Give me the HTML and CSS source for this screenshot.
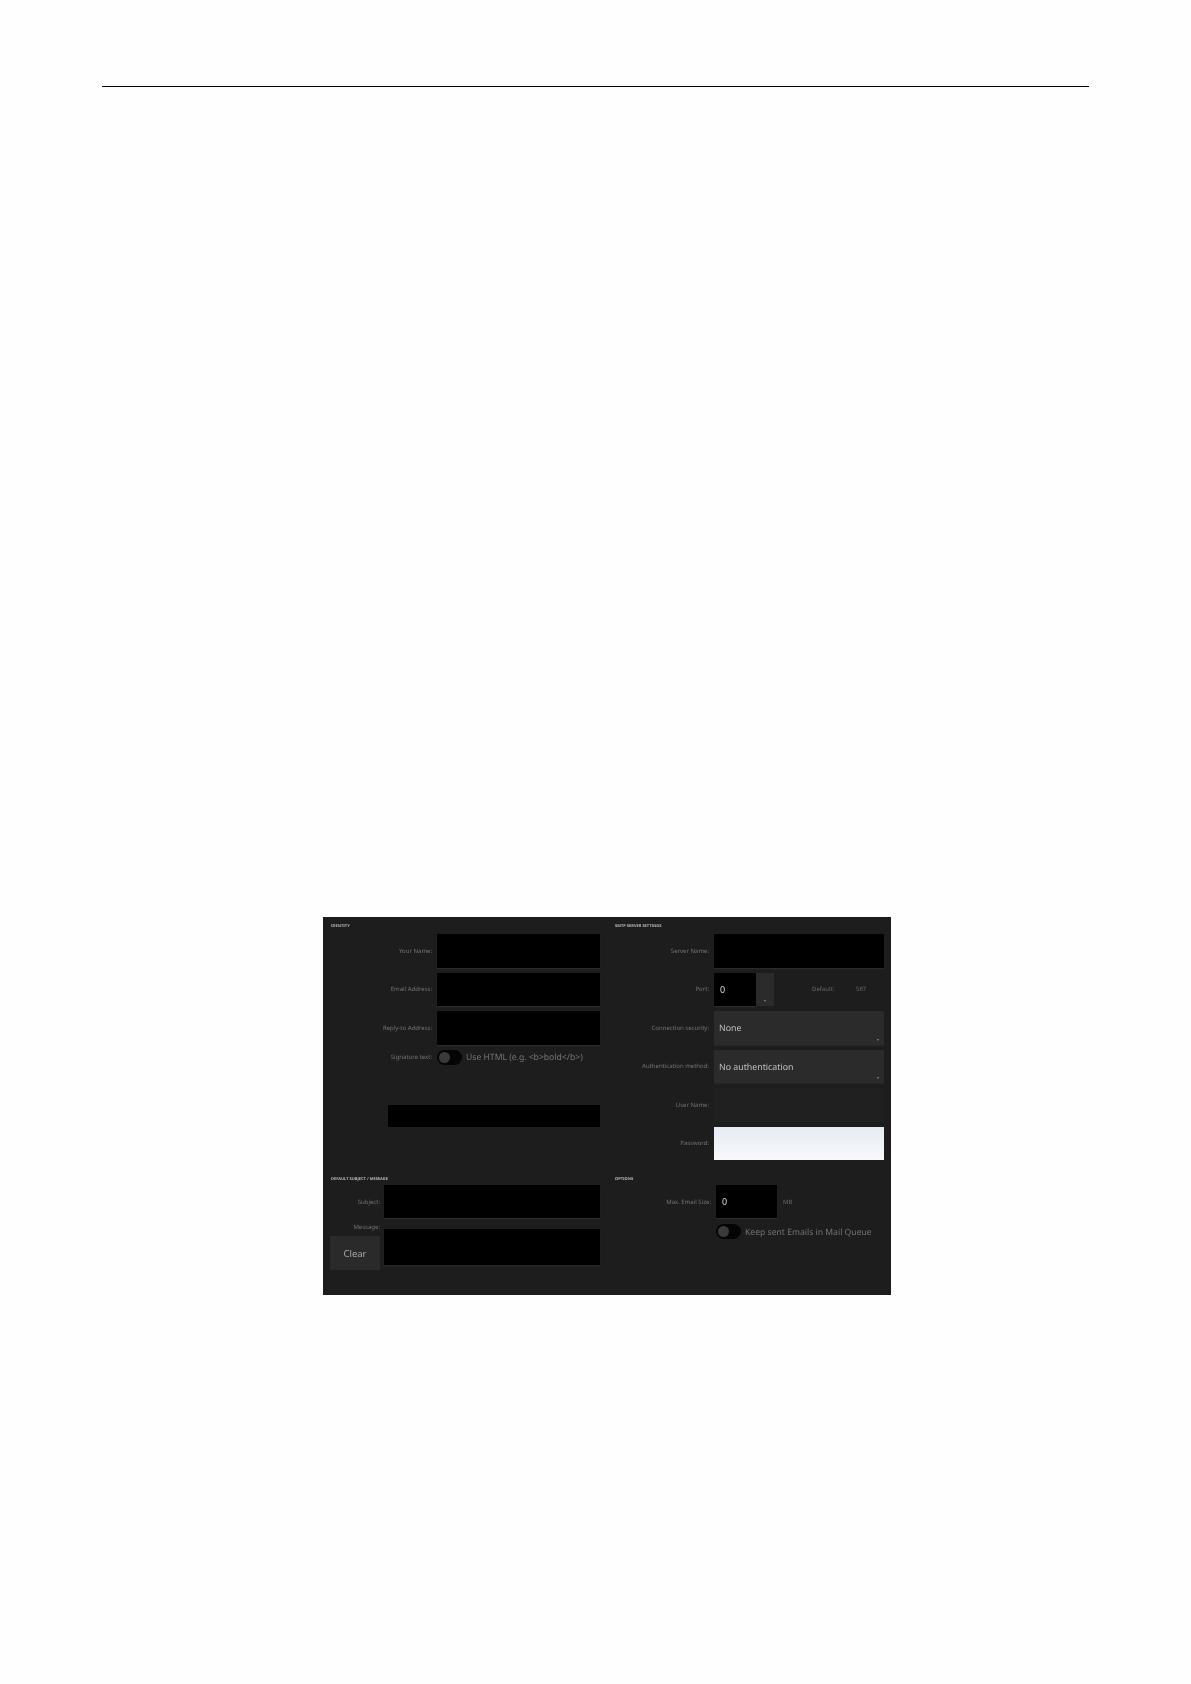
FILE: index.html
```html
<!DOCTYPE html>
<html lang="en">
<head>
<meta charset="utf-8">
<title>Email settings</title>
<link rel="stylesheet" href="styles.css">
</head>
<body>
<header class="rule"></header>
<main class="panel">
  <section class="group identity">
    <h2>Identity</h2>
    <div class="form">
      <label>Your Name:</label><input class="field" type="text">
      <label>Email Address:</label><input class="field" type="text">
      <label>Reply-to Address:</label><input class="field" type="text">
      <label class="short">Signature text:</label>
      <div class="switch-row short"><span class="switch"><i></i></span><span class="switch-text">Use HTML (e.g. &lt;b&gt;bold&lt;/b&gt;)</span></div>
    </div>
    <div class="signature"></div>
  </section>

  <section class="group smtp">
    <h2>SMTP Server Settings</h2>
    <div class="form">
      <label>Server Name:</label><input class="field" type="text">
      <label>Port:</label>
      <div class="port">
        <input class="field num" type="text" value="0">
        <span class="spin"><b class="arrow"></b></span>
        <span class="def-label">Default:</span>
        <span class="def-value">587</span>
      </div>
      <label>Connection security:</label>
      <div class="select">None<b class="arrow"></b></div>
      <label>Authentication method:</label>
      <div class="select">No authentication<b class="arrow"></b></div>
      <label>User Name:</label><div class="field disabled"></div>
      <label>Password:</label><div class="field password"></div>
    </div>
  </section>

  <section class="group defaults">
    <h2>Default Subject / Message</h2>
    <div class="form-b">
      <label>Subject:</label><input class="field" type="text">
      <div class="msg-side">
        <label>Message:</label>
        <button class="clear" type="button">Clear</button>
      </div>
      <div class="field message"></div>
    </div>
  </section>

  <section class="group options">
    <h2>Options</h2>
    <div class="form-c">
      <label>Max. Email Size:</label>
      <div class="size"><input class="field num" type="text" value="0"><span class="unit">MB</span></div>
      <span></span>
      <div class="switch-row keep"><span class="switch"><i></i></span><span class="switch-text">Keep sent Emails in Mail Queue</span></div>
    </div>
  </section>
</main>
</body>
</html>
```
FILE: styles.css
```css
* { box-sizing: border-box; }
html, body { margin: 0; padding: 0; }
body {
  width: 1191px;
  height: 1684px;
  background: #fefefe;
  font-family: "Noto Sans", "Open Sans", sans-serif;
  text-rendering: geometricPrecision;
  overflow: hidden;
}
.rule {
  height: 1px;
  margin: 86px 102px 0 102px;
  background: #000;
}
.panel {
  width: 568px;
  height: 378px;
  margin: 830px 0 0 323px;
  background: #1d1d1d;
  display: grid;
  grid-template-columns: 285px 283px;
  grid-template-rows: 253px 125px;
  filter: blur(0.3px);
}
.group { padding: 0 0 0 8px; }
.smtp, .options { padding-left: 7px; }
h2 {
  margin: 0;
  height: 17px;
  padding-top: 7px;
  font-size: 4px;
  line-height: 6px;
  font-weight: 700;
  text-transform: uppercase;
  color: #b8b8b8;
}
label {
  font-size: 6px;
  color: #747474;
  text-align: right;
  white-space: nowrap;
  align-self: center;
}
.field {
  display: block;
  width: 100%;
  height: 33.5px;
  border: 0;
  padding: 0 6px;
  margin: 0;
  background: #000;
  color: #ddd;
  font: 9px "Noto Sans", sans-serif;
  box-shadow: 0 1px 1px #2a2a2a;
  outline: 0;
}
.form {
  display: grid;
  column-gap: 5px;
  row-gap: 5px;
  grid-auto-rows: min-content;
}
.identity .form { grid-template-columns: 101px 163px; }
.smtp .form { grid-template-columns: 94px 170px; }
.short { align-self: center; }
.switch-row { display: flex; align-items: center; gap: 4px; }
.switch {
  display: block;
  width: 25px;
  height: 15px;
  padding: 2px;
  border-radius: 8px;
  background: #050505;
}
.switch i {
  display: block;
  width: 11px;
  height: 11px;
  border-radius: 50%;
  background: #3a3a3a;
}
.switch-text {
  font-size: 8.6px;
  color: #747474;
  white-space: nowrap;
}
.signature {
  width: 212px;
  height: 22px;
  margin: 40px 0 0 57px;
  background: #000;
}
.port { display: flex; align-items: center; height: 33.5px; }
.num { width: 42px; flex: none; }
.spin {
  position: relative;
  flex: none;
  width: 18px;
  height: 33.5px;
  background: #2b2b2b;
}
.arrow {
  position: absolute;
  right: 8px;
  bottom: 4px;
  border-left: 1.5px solid transparent;
  border-right: 1.5px solid transparent;
  border-top: 2px solid #8a8a8a;
}
.def-label {
  margin-left: 38px;
  width: 44px;
  font-size: 6px;
  color: #686868;
}
.def-value { font-size: 6px; color: #686868; }
.select {
  position: relative;
  height: 33.5px;
  padding-left: 5px;
  background: #2b2b2b;
  color: #c2c2c2;
  font-size: 8.8px;
  line-height: 35px;
  box-shadow: 0 1px 1px #252525;
}
.select .arrow { right: 5px; }
.disabled { background: #202020; box-shadow: none; }
.password {
  background: linear-gradient(#e6ecf3, #f8f9fb);
  box-shadow: none;
}
.form-b {
  display: grid;
  grid-template-columns: 49px 216px;
  column-gap: 4px;
  row-gap: 6px;
  margin-top: -2px;
}
.msg-side { display: flex; flex-direction: column; align-items: stretch; }
.msg-side label { align-self: flex-end; line-height: 9px; margin-top: -1px; }
.defaults .field { height: 33px; }
.defaults .message { height: 36px; margin-top: 5px; }
.clear {
  width: 50px;
  height: 34px;
  margin: 4px 0 0 -1px;
  border: 0;
  padding: 0;
  background: #2a2a2a;
  color: #a8a8a8;
  font: 9.5px "Noto Sans", sans-serif;
}
.form-c {
  display: grid;
  grid-template-columns: 97px auto;
  column-gap: 4px;
  row-gap: 6px;
  grid-auto-rows: min-content;
  margin-top: -2px;
}
.form-c label { padding-right: 1px; }
.size { display: flex; align-items: center; gap: 6px; }
.size .num { width: 61px; height: 33px; }
.unit { font-size: 6px; color: #686868; }
```
